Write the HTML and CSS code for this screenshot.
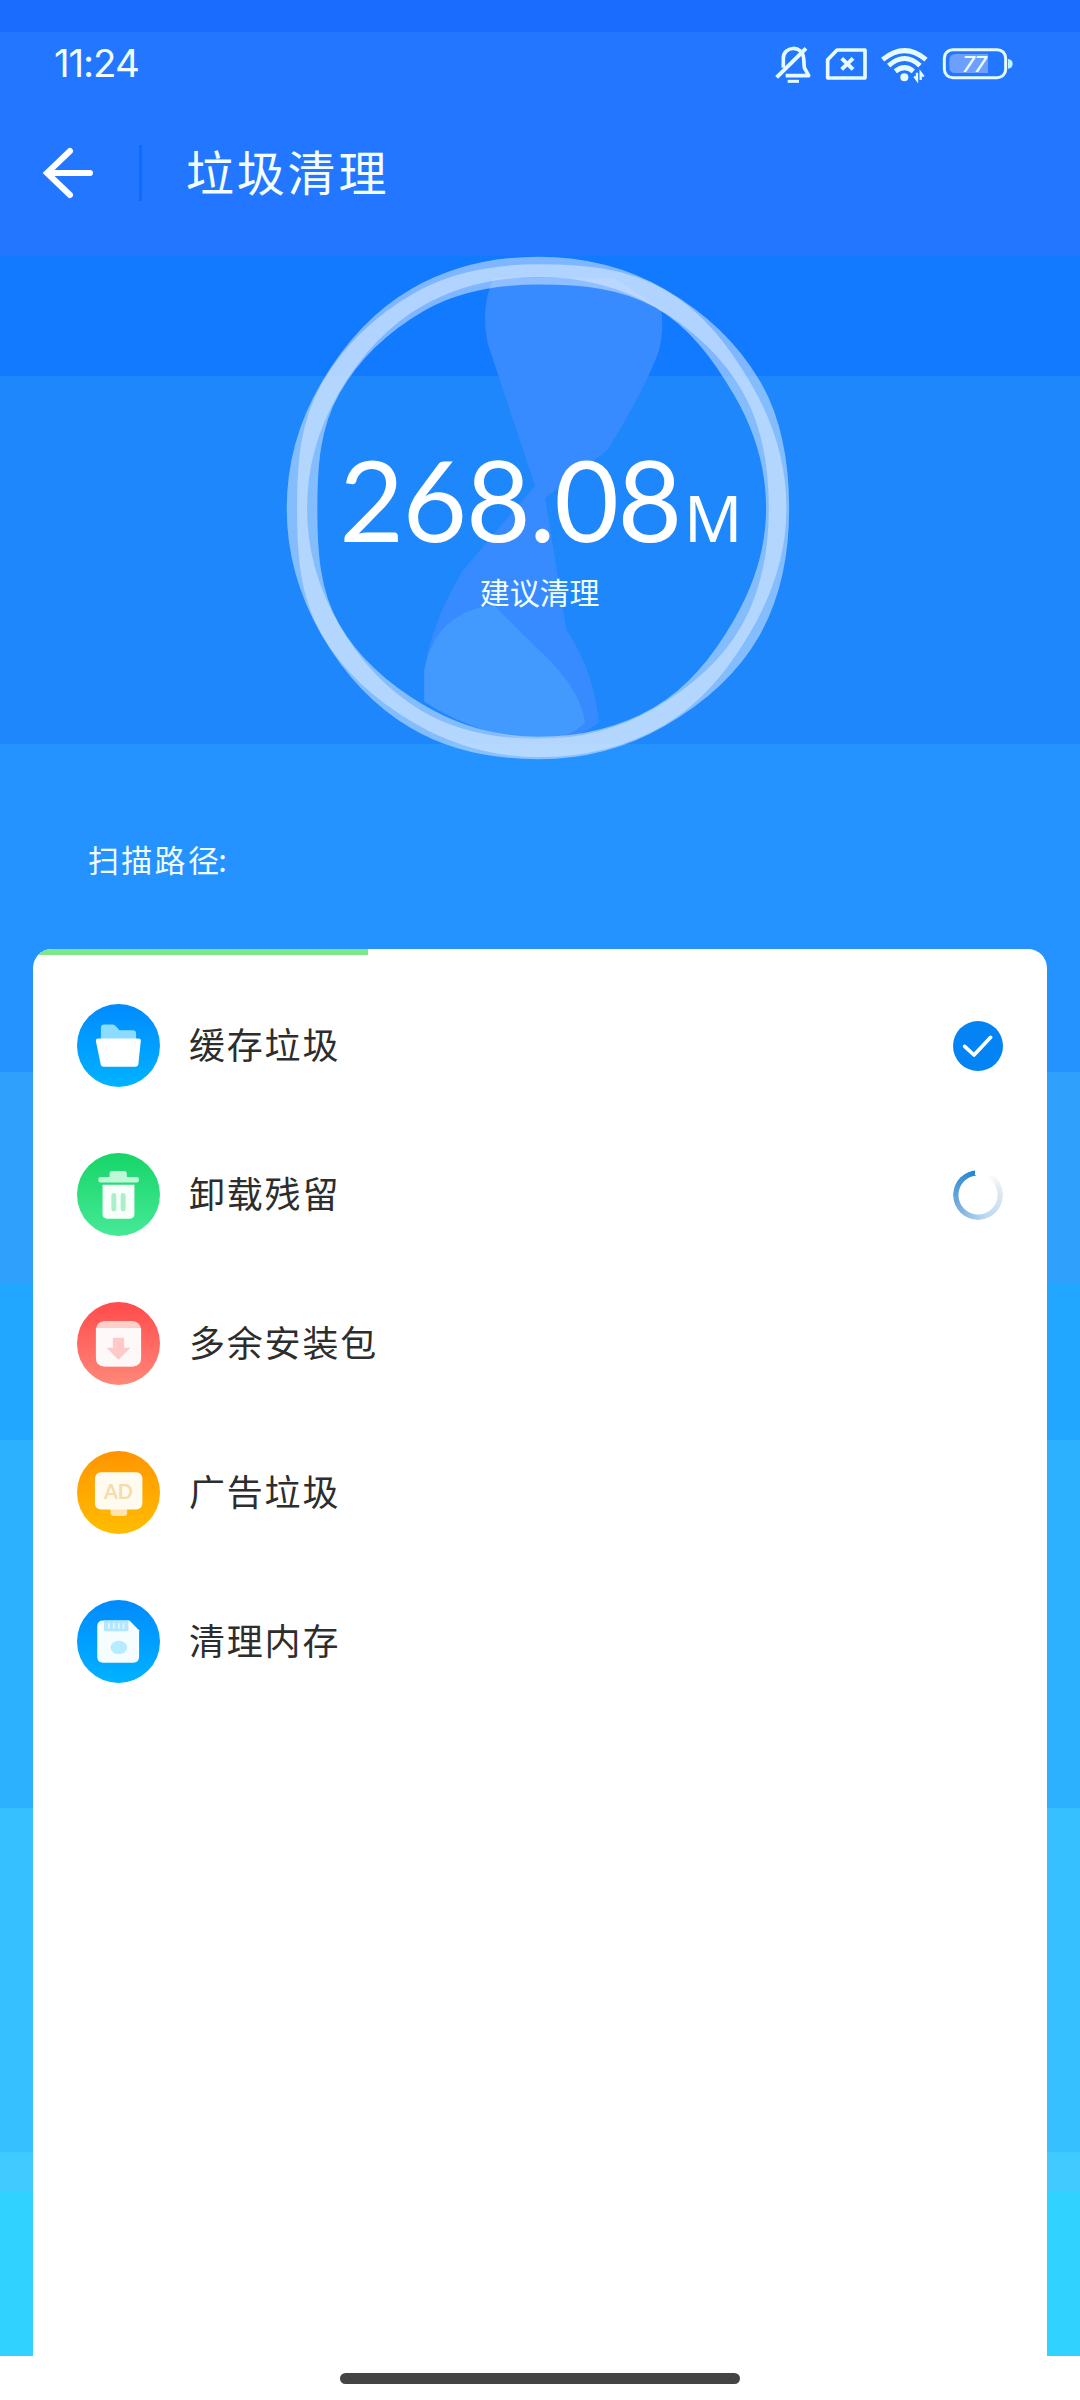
FILE: index.html
```html
<!DOCTYPE html>
<html lang="zh-CN">
<head>
<meta charset="utf-8">
<title>垃圾清理</title>
<link rel="stylesheet" href="styles.css">
</head>
<body>
<div class="screen">
  <header class="status">
    <span class="clock">11:24</span>
    <div class="status-icons">
      <svg width="36" height="42" viewBox="108 66 108 126" fill="none" stroke="#e6fbff" stroke-width="11" stroke-linejoin="round">
        <path d="M133 140V112C133 75 190 70 194 112L196 140L209 164H140"/>
        <path d="M113 169L201 82" stroke-width="12"/>
        <path d="M146 181H180" stroke-width="9"/>
      </svg>
      <svg width="42" height="34" viewBox="258 82 126 102" fill="none" stroke="#e6fbff" stroke-width="11" stroke-linejoin="round">
        <path d="M294 91H378V175H266V120Z"/>
        <path d="M308 116L342 149M342 116L308 149" stroke-width="12"/>
      </svg>
      <svg width="47" height="38" viewBox="424 72 141 114" fill="none" stroke="#e6fbff" stroke-width="15">
        <path d="M429 116Q495 62 559 116"/>
        <path d="M447 134Q495 91 541 134"/>
        <path d="M467 151Q495 129 521 151"/>
        <circle cx="494" cy="169" r="12" fill="#e6fbff" stroke="none"/>
        <path d="M524 166L532 177V155M543 177V155L552 167" stroke-width="7"/>
      </svg>
      <svg width="71" height="34" viewBox="606 80 213 102">
        <rect x="613" y="88" width="184" height="84" rx="25" fill="none" stroke="#e6fbff" stroke-width="9"/>
        <path d="M646 101H744V158H646Q628 158 628 140V119Q628 101 646 101Z" fill="#6c9fff"/>
        <path d="M804 116Q818 118 818 130Q818 143 804 145Z" fill="#bdf3ff"/>
        <text class="battery-level" x="702" y="155" text-anchor="middle">77</text>
      </svg>
    </div>
  </header>

  <nav class="appbar">
    <svg class="back" width="54" height="54" viewBox="0 0 54 54" fill="none" stroke="#fff" stroke-width="6" stroke-linecap="round">
      <path d="M29 5L6 27L29 49M7 27H49"/>
    </svg>
    <span class="divider"></span>
    <h1 class="title">垃圾清理</h1>
  </nav>

  <section class="gauge">
    <svg width="540" height="540" viewBox="0 0 1568 1568">
      <path d="M785 760L632 300Q610 190 650 110H1000L1135 200Q1145 250 1130 320Q1090 430 980 610Z" fill="#388bff"/>
      <path d="M790 690L560 960Q470 1110 448 1250V1340Q600 1440 780 1450Q900 1450 955 1400Q940 1250 860 1130Z" fill="#388bff"/>
      <path d="M650 1060Q480 1080 448 1250V1340Q600 1440 780 1450Q870 1450 915 1400Q900 1300 780 1190Z" fill="#429aff"/>
      <g fill="none" stroke="#dcebff" stroke-width="59" stroke-opacity=".54">
        <path d="M1478 780C1478 903 1456 1028 1395 1135S1236 1325 1130 1386S903 1478 780 1478S532 1455 426 1393S235 1236 174 1130S78 903 78 780S112 536 174 430S320 228 426 167S657 78 780 78S1026 107 1133 169S1335 318 1397 424S1478 657 1478 780Z"/>
        <path d="M1470 780C1470 903 1433 1015 1371 1121S1235 1322 1128 1384S903 1472 780 1472S541 1440 435 1378S236 1236 175 1130S108 903 108 780S115 538 176 431S327 241 433 180S657 100 780 100S1025 109 1132 170S1312 330 1374 437S1470 657 1470 780Z"/>
      </g>
      <text class="amount" x="201" y="877">268.08</text>
      <text class="unit" x="1202" y="877">M</text>
      <text class="hint" x="783" y="1058" text-anchor="middle">建议清理</text>
    </svg>
  </section>

  <p class="path">扫描路径<span class="colon">:</span></p>

  <main class="card">
    <div class="progress"><div class="bar"></div></div>
    <ul class="list">
      <li class="row">
        <svg class="icon" viewBox="0 0 250 250">
          <defs><linearGradient id="blue" x2="0" y2="1"><stop stop-color="#008bff"/><stop offset="1" stop-color="#00b2ff"/></linearGradient></defs>
          <circle cx="125" cy="125" r="125" fill="url(#blue)"/>
          <path d="M72 110V72Q72 62 82 62H108Q114 62 120 70L128 79H168Q178 79 178 89V110Z" fill="#8cdcff"/>
          <path d="M64 104H186Q193 104 192 112L185 180Q184 189 175 189H80Q72 189 71 180L57 112Q56 104 64 104Z" fill="#fff"/>
        </svg>
        <span class="label">缓存垃圾</span>
        <svg class="state" viewBox="0 0 150 150">
          <circle cx="75" cy="75" r="75" fill="#0484f4"/>
          <path d="M35 76L63 102L113 49" fill="none" stroke="#fff" stroke-width="11" stroke-linecap="round" stroke-linejoin="round"/>
        </svg>
      </li>
      <li class="row">
        <svg class="icon" viewBox="0 0 250 250">
          <defs><linearGradient id="green" x2="0" y2="1"><stop stop-color="#16d568"/><stop offset="1" stop-color="#46e996"/></linearGradient></defs>
          <circle cx="125" cy="125" r="125" fill="url(#green)"/>
          <path d="M98 72V62Q98 54 106 54H142Q150 54 150 62V72H180Q187 72 187 80Q187 89 180 89H71Q64 89 64 80Q64 72 71 72Z" fill="#bff8d8"/>
          <path d="M77 96H173V184Q173 198 159 198H91Q77 198 77 184Z" fill="#f8fffa"/>
          <path d="M111 128V169M139 128V169" stroke="#a9f0ca" stroke-width="15" stroke-linecap="round"/>
        </svg>
        <span class="label">卸载残留</span>
        <div class="state spinner"></div>
      </li>
      <li class="row">
        <svg class="icon" viewBox="0 0 250 250">
          <defs><linearGradient id="red" x2="0" y2="1"><stop stop-color="#ff4b4b"/><stop offset="1" stop-color="#ff8779"/></linearGradient></defs>
          <circle cx="125" cy="125" r="125" fill="url(#red)"/>
          <rect x="57" y="57" width="136" height="137" rx="26" fill="#ffcfca"/>
          <path d="M57 78H193V168Q193 194 167 194H83Q57 194 57 168Z" fill="#fff8f8"/>
          <path d="M108 108H142V138H161L125 174L89 138H108Z" fill="#ffc9c7"/>
        </svg>
        <span class="label">多余安装包</span>
      </li>
      <li class="row">
        <svg class="icon" viewBox="0 0 250 250">
          <defs><linearGradient id="orange" x2="0" y2="1"><stop stop-color="#ff9500"/><stop offset="1" stop-color="#ffbd00"/></linearGradient></defs>
          <circle cx="125" cy="125" r="125" fill="url(#orange)"/>
          <path d="M101 170H151V186Q151 196 141 196H111Q101 196 101 186Z" fill="#ffe2ac"/>
          <rect x="54" y="64" width="143" height="112" rx="18" fill="#fffbf0"/>
          <text class="ad" x="125" y="145" text-anchor="middle">AD</text>
        </svg>
        <span class="label">广告垃圾</span>
      </li>
      <li class="row">
        <svg class="icon" viewBox="0 0 250 250">
          <circle cx="125" cy="125" r="125" fill="url(#blue)"/>
          <path d="M79 62H158L187 91V171Q187 189 169 189H79Q61 189 61 171V80Q61 62 79 62Z" fill="#f5fdff"/>
          <path d="M81 62H155V88Q155 94 149 94H87Q81 94 81 88Z" fill="#b5e6ff"/>
          <path d="M96 70V86M111 70V86M126 70V86M140 70V86" stroke="#e6f8ff" stroke-width="5"/>
          <ellipse cx="126" cy="143" rx="25" ry="20" fill="#b5ecff"/>
        </svg>
        <span class="label">清理内存</span>
      </li>
    </ul>
  </main>
  <footer class="home"><div class="handle"></div></footer>
</div>
</body>
</html>
```
FILE: styles.css
```css
* { box-sizing: border-box; }
body {
  margin: 0;
  font-family: "Noto Sans CJK SC", sans-serif;
  background: #fff;
}
.screen {
  width: 1080px;
  height: 2400px;
  display: flex;
  flex-direction: column;
  background: linear-gradient(
    #196cff 0 32px, #2276ff 32px 256px, #117aff 256px 376px,
    #1e87fb 376px 744px, #2493ff 744px 1072px, #30a0fd 1072px 1283px,
    #21a7ff 1283px 1440px, #2bb1ff 1440px 1808px, #37c0ff 1808px 2152px,
    #40caff 2152px 2192px, #30d2ff 2192px 2356px, #fff 2356px);
}
.status {
  height: 127px;
  flex: none;
  padding: 0 67px 0 54px;
  display: flex;
  justify-content: space-between;
  align-items: center;
}
.clock {
  font: 400 38.5px/1 Inter, sans-serif;
  letter-spacing: -1.1px;
  color: #effdff;
}
.status-icons { display: flex; align-items: center; gap: 14px; }
.battery-level { font: italic 500 66px Inter, sans-serif; fill: #e9fdff; letter-spacing: -3px; }
.appbar {
  height: 91px;
  flex: none;
  padding-left: 41px;
  display: flex;
  align-items: center;
}
.divider { width: 3px; height: 56px; margin: 0 44px 0 44px; background: #0f6cff; }
.title { margin: 0; padding-bottom: 5px; font-size: 48px; line-height: 72px; font-weight: 400; letter-spacing: 2.8px; color: #f2feff; }
.gauge { height: 540px; flex: none; margin-top: 22px; display: flex; justify-content: center; }
.amount { font: 324px Lato, sans-serif; letter-spacing: -4px; fill: #fff; }
.unit { font: 187px "Noto Sans", sans-serif; fill: #fff; }
.hint { font: 87px "Noto Sans CJK SC", sans-serif; fill: #f2feff; }
.path {
  margin: 55px 0 0;
  padding-left: 88px;
  height: 114px;
  flex: none;
  font-size: 31px;
  line-height: 48px;
  letter-spacing: 2.3px;
  color: #effcff;
}
.colon { margin-left: -3px; }
.card {
  flex: none;
  height: 1407px;
  margin: 0 33px;
  background: #fff;
  border-radius: 19px 19px 0 0;
  overflow: hidden;
}
.progress { height: 6px; }
.bar { width: 33%; height: 100%; background: #7de986; }
.list { margin: 0; padding: 49px 44px 0 44px; list-style: none; display: flex; flex-direction: column; gap: 66px; }
.row { height: 83px; display: flex; align-items: center; }
.icon { width: 83px; height: 83px; flex: none; }
.label { margin-left: 29px; padding-bottom: 5px; font-size: 36px; line-height: 54px; letter-spacing: 1.8px; color: #2d2d2d; }
.state { width: 50px; height: 50px; margin-left: auto; }
.spinner {
  border-radius: 50%;
  background: conic-gradient(#fff 0 8%, #e5eaf2 20%, #bbd9f0 45%, #7bb0e0 65%, #2584d3 98%, #fff 98%);
  -webkit-mask: radial-gradient(circle, transparent 19px, #000 20px);
  mask: radial-gradient(circle, transparent 19px, #000 20px);
}
.ad { font: 700 60px Lato, sans-serif; fill: #f5dcab; }
.home { height: 44px; display: flex; justify-content: center; padding-top: 17px; }
.handle { width: 400px; height: 11px; border-radius: 6px; background: #444; }
```
